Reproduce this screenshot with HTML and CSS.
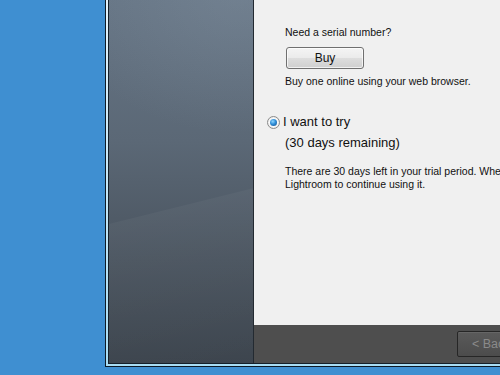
FILE: index.html
```html
<!DOCTYPE html>
<html lang="en">
<head>
  <meta charset="UTF-8" />
  <title>Lightroom - Trial</title>
  <meta name="viewport" content="width=device-width, initial-scale=1.0" />
  <link rel="stylesheet" href="styles.css">
</head>
<body>
  <div class="window">
    <div class="frame">
      <div class="sidebar">
        <div class="sweep"></div>
      </div>
      <div class="main">
        <div class="content">
          <p class="small">Need a serial number?</p>
          <button class="buy-btn">Buy</button>
          <p class="small hint">Buy one online using your web browser.</p>

          <label class="radio-row">
            <span class="radio"><span class="dot"></span></span>
            <span class="big">I want to try</span>
          </label>
          <p class="big remaining">(30 days remaining)</p>
          <p class="small trial">There are 30 days left in your trial period. When the trial period expires, you must purchase<br>Lightroom to continue using it.</p>
        </div>
        <div class="footer">
          <button class="back-btn">&lt; Back</button>
        </div>
      </div>
    </div>
  </div>
</body>
</html>
```

FILE: styles.css
```css
body {
  margin: 0;
  width: 500px;
  height: 375px;
  overflow: hidden;
  background-color: #3f8fd1;
  font-family: "Liberation Sans", Arial, sans-serif;
  padding-left: 105px;
  box-sizing: border-box;
}
.window {
  margin-top: -10px;
  width: 560px;
  height: 377px;
  box-sizing: border-box;
  border: 1px solid #0e1b27;
  padding: 2px;
  background: linear-gradient(to bottom, #e6f4fc, #a8ddf4);
}
.frame {
  display: flex;
  height: 100%;
  box-sizing: border-box;
  border: 1px solid #15202a;
}
.sidebar {
  position: relative;
  width: 144px;
  flex-shrink: 0;
  border-right: 1px solid #232a31;
  background:
    radial-gradient(ellipse 260px 200px at 130px 0px, rgba(140, 155, 170, 0.3), rgba(140, 155, 170, 0) 70%),
    linear-gradient(to bottom, #667585 0%, #5b6876 40%, #4a545f 72%, #3c444d 100%);
  overflow: hidden;
}
.sweep {
  position: absolute;
  left: -80px;
  top: 250px;
  width: 400px;
  height: 200px;
  background: linear-gradient(to bottom, rgba(255, 255, 255, 0.035), rgba(255, 255, 255, 0));
  transform: rotate(-14deg);
  transform-origin: 0 0;
}
.main {
  flex: 1;
  display: flex;
  flex-direction: column;
}
.content {
  flex: 1;
  background-color: #f0f0f0;
  padding: 32px 0 0 31px;
  color: #111;
}
.small {
  margin: 0;
  font-size: 10.5px;
  line-height: 13px;
  white-space: nowrap;
}
.big {
  margin: 0;
  font-size: 13px;
  line-height: 16px;
}
.buy-btn {
  display: block;
  margin-top: 8px;
  margin-left: 1px;
  width: 78px;
  height: 22px;
  border: 1px solid #707070;
  border-radius: 3px;
  background: linear-gradient(to bottom, #f4f4f4 0%, #ebebeb 48%, #dddddd 52%, #cfcfcf 100%);
  box-shadow: inset 0 0 0 1px rgba(255, 255, 255, 0.7);
  font-family: "Liberation Sans", Arial, sans-serif;
  font-size: 12px;
  color: #111;
  padding: 0;
}
.hint {
  margin-top: 6px;
}
.radio-row {
  display: flex;
  align-items: center;
  gap: 3px;
  margin-top: 26px;
  margin-left: -18px;
}
.radio {
  width: 11px;
  height: 11px;
  border: 1px solid #8b8b8b;
  border-radius: 50%;
  background: radial-gradient(circle, #ffffff 40%, #dcdcdc 100%);
  display: flex;
  align-items: center;
  justify-content: center;
}
.dot {
  width: 7px;
  height: 7px;
  border-radius: 50%;
  background: radial-gradient(circle at 40% 35%, #8fd6ff 0%, #2f8ed8 45%, #134a86 100%);
}
.remaining {
  margin-top: 5px;
}
.trial {
  margin-top: 14px;
}
.footer {
  height: 38px;
  background-color: #4e4e4e;
  display: flex;
  align-items: center;
  padding-left: 203px;
}
.back-btn {
  width: 80px;
  height: 26px;
  border: 1px solid #262626;
  border-radius: 2px;
  background: linear-gradient(to bottom, #5a5a5a, #4c4c4c);
  box-shadow: inset 0 1px 0 rgba(255, 255, 255, 0.08);
  color: #8a8a8a;
  font-family: "Liberation Sans", Arial, sans-serif;
  font-size: 12.5px;
  text-align: left;
  padding: 0 0 0 14px;
}
```
